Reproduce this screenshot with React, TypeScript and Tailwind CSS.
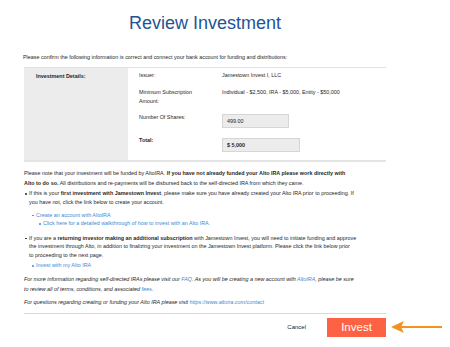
import React from "react";

const link = "text-[#3d8bd4]";

function Bullet({ level, children, dot = "bg-[#222]" }: { level: 1 | 2 | 3; children: React.ReactNode; dot?: string }) {
  const pad = level === 1 ? "pl-[1px]" : level === 2 ? "pl-[8px]" : "pl-[15px]";
  return (
    <div className={`flex items-start ${pad}`}>
      <span className="w-[4px] shrink-0 flex justify-start pt-[4px]">
        <span className={`block w-[1.5px] h-[1.5px] rounded-full ${dot}`} />
      </span>
      <span>{children}</span>
    </div>
  );
}

export default function App() {
  return (
    <div
      className="w-[450px] h-[347px] bg-white overflow-hidden text-[#1f1f1f]"
      style={{ fontFamily: '"Liberation Sans", Arial, sans-serif' }}
    >
      <div className="ml-[24px] w-[362px]">
        {/* Heading */}
        <h1 className="pt-[14px] text-center text-[18px] leading-[18px] text-[#245395]">Review Investment</h1>

        <p className="mt-[21px] -ml-[1px] text-[5.4px] leading-[8px]">
          Please confirm the following information is correct and connect your bank account for funding and distributions:
        </p>

        {/* Details table */}
        <div className="mt-[6px] flex border-t border-[#e2e2e2] border-b-2 border-b-[#e4e4e4] text-[5.4px] leading-[9px]">
          <div className="w-[104px] shrink-0 bg-[#ececec] pl-[12px] pt-[4px] font-bold">Investment Details:</div>
          <div className="flex-1 pl-[11px] pt-[3px] pb-[8px]">
            <div className="flex">
              <div className="w-[83px] shrink-0">Issuer:</div>
              <div>Jamestown Invest I, LLC</div>
            </div>
            <div className="flex mt-[8px] leading-[9.4px]">
              <div className="w-[83px] shrink-0">
                Minimum Subscription
                <br />
                Amount:
              </div>
              <div>Individual - $2,500, IRA - $5,000, Entity - $50,000</div>
            </div>
            <div className="flex items-start mt-[6px]">
              <div className="w-[83px] shrink-0">Number Of Shares:</div>
              <div className="mt-[1.5px] w-[67px] h-[14px] bg-[#ececec] border border-[#d6d6d6] pl-[4px] flex items-center">
                499.00
              </div>
            </div>
            <div className="flex items-start mt-[8px]">
              <div className="w-[83px] shrink-0 font-bold">Total:</div>
              <div className="mt-[2px] w-[78px] h-[14px] bg-[#ececec] border border-[#d6d6d6] pl-[4px] flex items-center font-bold">
                $ 5,000
              </div>
            </div>
          </div>
        </div>

        {/* Notes */}
        <div className="text-[5.4px]">
          <p className="mt-[7px] leading-[9.4px] whitespace-nowrap">
            Please note that your investment will be funded by AltoIRA.{" "}
            <b>If you have not already funded your Alto IRA please work directly with</b>
            <br />
            <b>Alto to do so.</b> All distributions and re-payments will be disbursed back to the self-directed IRA from which they came.
          </p>

          <div className="mt-[1px] leading-[8.4px] whitespace-nowrap">
            <Bullet level={1}>
              If this is your <b>first investment with Jamestown Invest</b>, please make sure you have already created your Alto IRA prior to proceeding. If
              <br />
              you have not, click the link below to create your account.
            </Bullet>
            <div className="mt-[5px]">
              <Bullet level={2} dot="bg-[#3d8bd4]">
                <span className={link}>Create an account with AltoIRA</span>
              </Bullet>
              <Bullet level={3} dot="bg-[#3d8bd4]">
                <span className={link}>Click here for a detailed walkthrough of how to invest with an Alto IRA.</span>
              </Bullet>
            </div>
            <div className="mt-[6px]">
              <Bullet level={1}>
                If you are a <b>returning investor making an additional subscription</b> with Jamestown Invest, you will need to initiate funding and approve
                <br />
                the investment through Alto, in addition to finalizing your investment on the Jamestown Invest platform. Please click the link below prior
                <br />
                to proceeding to the next page.
              </Bullet>
            </div>
            <div className="mt-[2.5px]">
              <Bullet level={2} dot="bg-[#3d8bd4]">
                <span className={link}>Invest with my Alto IRA</span>
              </Bullet>
            </div>
          </div>

          <p className="mt-[5px] italic leading-[9.7px] whitespace-nowrap">
            For more information regarding self-directed IRAs please visit our <span className={link}>FAQ</span>. As you will be creating a new account with{" "}
            <span className={link}>AltoIRA</span>, please be sure
            <br />
            to review all of terms, conditions, and associated <span className={link}>fees</span>.
          </p>
          <p className="mt-[4px] italic leading-[9.4px] whitespace-nowrap">
            For questions regarding creating or funding your Alto IRA please visit{" "}
            <span className={link}>https://www.altoira.com/contact</span>
          </p>
        </div>

        <div className="mt-[5px] border-t border-[#dadada]" />

        {/* Actions */}
        <div className="mt-[4px] flex items-center justify-end">
          <button className="mr-[21px] text-[6px] text-[#222]">Cancel</button>
          <div className="relative">
            <button className="w-[59px] h-[19.5px] bg-[#fc6243] text-white text-[11.5px] leading-none flex items-center justify-center">
              Invest
            </button>
            <svg
              className="absolute left-[64px] top-[2.5px]"
              width="52"
              height="14"
              viewBox="0 0 52 14"
            >
              <path d="M10 7 H51" stroke="#f5921f" strokeWidth="2.2" fill="none" />
              <path d="M0 7 L13 1 L10 7 L13 13 Z" fill="#f5921f" />
            </svg>
          </div>
        </div>
      </div>
    </div>
  );
}
